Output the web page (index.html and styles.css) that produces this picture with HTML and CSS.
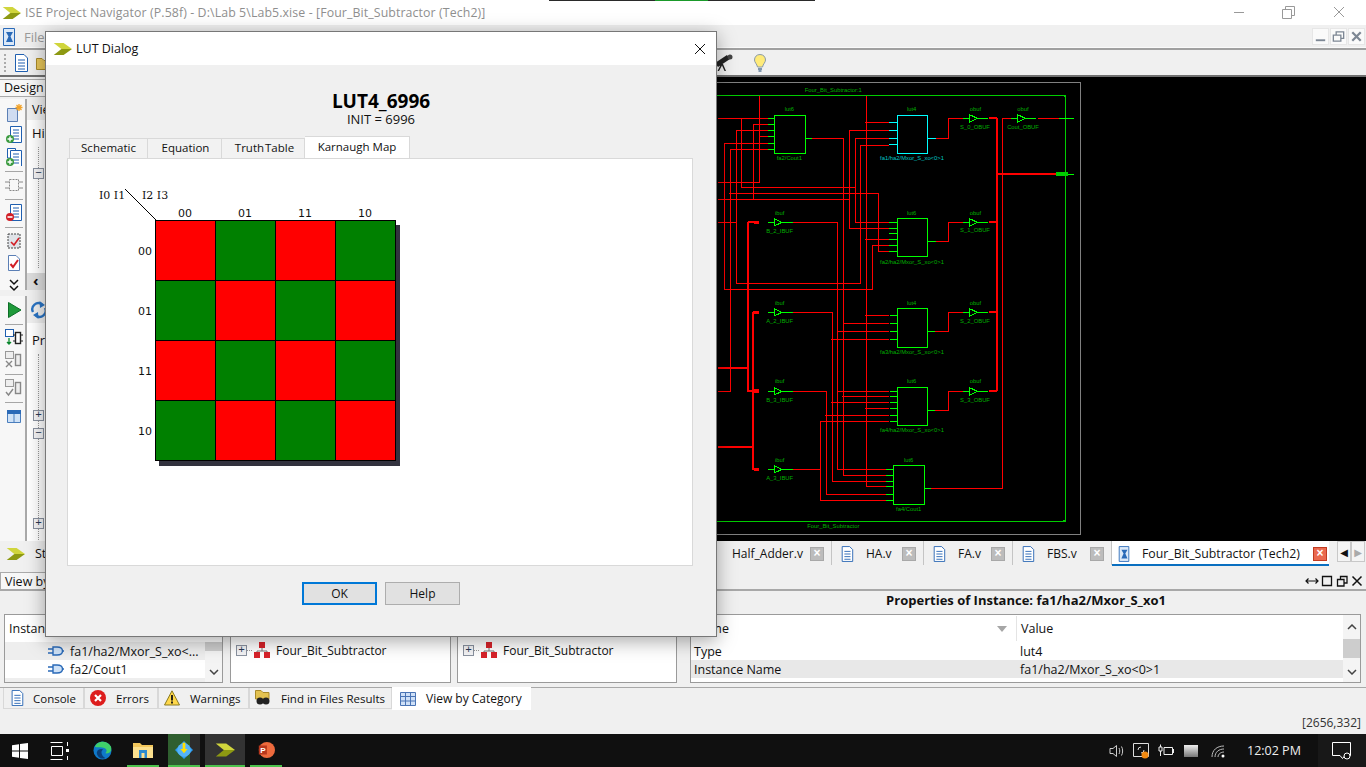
FILE: index.html
```html
<!DOCTYPE html>
<html lang="en">
<head>
<meta charset="utf-8">
<title>ISE Project Navigator</title>
<link rel="stylesheet" href="styles.css">
</head>
<body>
<svg class="defs" width="0" height="0" aria-hidden="true">
  <symbol id="xlogo" viewBox="0 0 25 16">
    <path fill="#d0d53c" d="M1 0H14L25 8H11Z"/>
    <path fill="#8d9912" d="M11 8H25L14 16H1Z"/>
  </symbol>
  <symbol id="doc" viewBox="0 0 16 18">
    <path fill="#fff" stroke="#1f5fb0" d="M2.500 .5H11L14.500 4V17.500H2.500Z"/>
    <path stroke="#1f5fb0" d="M5 6H12M5 9H12M5 12H12M5 15H12"/>
  </symbol>
  <symbol id="tech" viewBox="0 0 16 18">
    <path fill="#dce9f8" stroke="#2a6ab8" d="M2.500 .5H13.500V17.500H2.500Z"/>
    <path fill="#2a6ab8" d="M5 4H12L9.500 8.500 12 14H5L7.500 8.500Z"/>
  </symbol>
  <symbol id="gate" viewBox="0 0 16 10">
    <path fill="none" stroke="#2a6ab8" stroke-width="1.400" d="M0 3H5M0 7H5M14 5H16"/>
    <path fill="#cfe2f7" stroke="#2a6ab8" stroke-width="1.400" d="M5 1H9C13 1 14.500 3 14.500 5S13 9 9 9H5Z"/>
  </symbol>
  <symbol id="hier" viewBox="0 0 16 16">
    <path stroke="#777" fill="none" d="M8 6V9M3 12V9H13V12"/>
    <path fill="#d8232a" d="M5 0H11V6H5ZM0 10H6V16H0ZM10 10H16V16H10Z"/>
  </symbol>
  <symbol id="chip" viewBox="0 0 18 18">
    <rect x="4.500" y="3.500" width="9" height="11" fill="none" stroke="#888" stroke-dasharray="2 1"/>
    <path stroke="#888" d="M0 6H4M0 12H4M14 6H18M14 12H18"/>
  </symbol>
  <symbol id="addoc" viewBox="0 0 18 18">
    <path fill="#fff" stroke="#1f5fb0" d="M5.500 .5H16.500V16.500H5.500Z"/>
    <path stroke="#1f5fb0" d="M8 4H14M8 7H14M8 10H14M8 13H14"/>
  </symbol>
</svg>
<div class="app">
  <div class="topstrip"></div>
  <header class="titlebar">
    <svg class="tlogo"><use href="#xlogo"/></svg>
    <span class="ttext">ISE Project Navigator (P.58f) - D:\Lab 5\Lab5.xise - [Four_Bit_Subtractor (Tech2)]</span>
    <div class="winctl">
      <svg class="wc" viewBox="0 0 50 24"><path stroke="#999" d="M20 11.500H30"/></svg>
      <svg class="wc" viewBox="0 0 50 24"><path fill="none" stroke="#999" d="M18.500 8.500H27.500V17.500H18.500ZM21.500 8V5.500H30.500V14.500H28"/></svg>
      <svg class="wc" viewBox="0 0 50 24"><path stroke="#999" d="M20 6L30 16M30 6L20 16"/></svg>
    </div>
  </header>
  <nav class="menubar">
    <svg class="micon"><use href="#tech"/></svg>
    <span class="menuitem">File</span>
    <div class="mdi">
      <span class="mdibtn"><svg viewBox="0 0 16 16"><path stroke="#7d8794" stroke-width="2" d="M3 12H13"/></svg></span>
      <span class="mdibtn"><svg viewBox="0 0 16 16"><path fill="none" stroke="#7d8794" stroke-width="1.400" d="M2.500 6.500H10.500V13H2.500ZM5.500 6V3H13.500V10H11"/></svg></span>
      <span class="mdibtn"><svg viewBox="0 0 16 16"><path stroke="#7d8794" stroke-width="2.400" d="M3.500 3.500L12.500 12.500M12.500 3.500L3.500 12.500"/></svg></span>
    </div>
  </nav>
  <div class="toolbar">
    <span class="grip"></span>
    <svg class="tbicon"><use href="#doc"/></svg>
    <svg class="tbicon" viewBox="0 0 16 16"><path fill="#e7c65a" stroke="#a98a2a" d="M.5 3.500H6L8 5.500H15.500V14.500H.5Z"/></svg>
    <svg class="scope" viewBox="0 0 20 18"><path fill="#222" d="M1 9L13 1 16 5 4 13ZM9 10L12 17H10.500L8 11.500 5 17H3.500L7 10Z"/><circle cx="16" cy="3" r="2.500" fill="#444"/></svg>
    <svg class="bulb" viewBox="0 0 14 18"><path fill="#ffeb7a" stroke="#8a9aa8" d="M7 .5C3.500 .5 1.500 3 1.500 6C1.500 8.500 4 10 4.500 13H9.500C10 10 12.500 8.500 12.500 6C12.500 3 10.500 .5 7 .5Z"/><path stroke="#5b7a99" stroke-width="1.500" d="M5 15H9M5.500 17H8.500"/></svg>
  </div>

  <main class="main">
    <section class="leftcol">
      <div class="designrow"><span class="designtab">Design</span></div>
      <div class="upper">
        <div class="side">
          <svg class="si" viewBox="0 0 18 18"><path fill="#cfdcf1" stroke="#5b7fb5" d="M2.500 4.500H12.500V17.500H2.500Z"/><path stroke="#f2a32a" stroke-width="1.300" d="M14 0V7M10.500 3.500H17.500M11.500 1L16.500 6M16.500 1L11.500 6"/></svg>
          <svg class="si" viewBox="0 0 18 18"><use href="#addoc"/><circle cx="5" cy="13" r="4" fill="#3a9a3e"/><path stroke="#fff" stroke-width="1.400" d="M2.500 13H7.500M5 10.500V15.500"/></svg>
          <svg class="si" viewBox="0 0 18 18"><path fill="#fff" stroke="#1f5fb0" d="M2.500 .5H10.500V10H2.500Z"/><use href="#addoc" y="2"/><circle cx="5" cy="14" r="4" fill="#3a9a3e"/><path stroke="#fff" stroke-width="1.400" d="M2.500 14H7.500M5 11.500V16.500"/></svg>
          <span class="sep"></span>
          <svg class="si"><use href="#chip"/></svg>
          <span class="sep"></span>
          <svg class="si" viewBox="0 0 18 18"><use href="#addoc"/><circle cx="5" cy="13" r="4" fill="#d21f26"/><path stroke="#fff" stroke-width="1.600" d="M2.500 13H7.500"/></svg>
          <span class="sep"></span>
          <svg class="si" viewBox="0 0 18 18"><rect x="3" y="2" width="12" height="14" fill="#dfe3e8" stroke="#444" stroke-dasharray="2 1"/><path fill="none" stroke="#d21f26" stroke-width="1.600" d="M6 10L9 13 14 6"/></svg>
          <svg class="si" viewBox="0 0 18 18"><path fill="#fff" stroke="#5b7fb5" d="M3.500 1.500H11L14.500 5V16.500H3.500Z"/><path fill="none" stroke="#d21f26" stroke-width="2" d="M5.500 10L8 13 13 6"/></svg>
          <svg class="si" viewBox="0 0 18 18"><path fill="none" stroke="#111" stroke-width="1.500" d="M5 4L9 8 13 4M5 10L9 14 13 10"/></svg>
        </div>
        <div class="pane">
          <div class="panehead"><span>View</span></div>
          <div class="panebody">
            <div class="panelabel">Hierarchy</div>
            <div class="tree treeup"><span class="tbox tm1">−</span></div>
          </div>
          <div class="hscroll"><span>‹</span></div>
        </div>
      </div>
      <div class="split"></div>
      <div class="lower">
        <div class="side side2">
          <svg class="si" viewBox="0 0 18 18"><path fill="#1f9a3a" stroke="#0d6e28" d="M3.500 1.500L16 9 3.500 16.500Z"/></svg>
          <span class="sep"></span>
          <svg class="si" viewBox="0 0 18 18"><rect x="0.500" y="0.500" width="8" height="7" fill="#fff" stroke="#1f5fb0"/><path stroke="#0a8a2e" stroke-width="1.300" d="M4 9V15M2 13L4 15 6 13"/><rect x="10.500" y="3.500" width="5" height="11" fill="#fff" stroke="#222" stroke-width="1.400"/><path stroke="#222" d="M8 6H10M8 12H10M16 6H18M16 12H18"/></svg>
          <svg class="si" viewBox="0 0 18 18"><rect x="0.500" y="0.500" width="8" height="7" fill="#eee" stroke="#999"/><path stroke="#888" stroke-width="1.400" d="M1 10L7 16M7 10L1 16"/><rect x="10.500" y="3.500" width="5" height="11" fill="#eee" stroke="#888" stroke-width="1.400"/></svg>
          <span class="sep"></span>
          <svg class="si" viewBox="0 0 18 18"><rect x="0.500" y="0.500" width="8" height="7" fill="#eee" stroke="#999"/><path fill="none" stroke="#888" stroke-width="1.400" d="M1 13L3.500 16 8 10"/><rect x="10.500" y="3.500" width="5" height="11" fill="#eee" stroke="#888" stroke-width="1.400"/></svg>
          <span class="sep"></span>
          <svg class="si" viewBox="0 0 18 18"><path fill="#cfe2f7" stroke="#4a7ebd" d="M2.500 3.500H15.500V15.500H2.500ZM9 7V15.500"/><path fill="#2a6ab8" d="M2 3H16V7H2Z"/></svg>
        </div>
        <div class="pane">
          <div class="panehead2">
            <svg class="refresh" viewBox="0 0 18 18"><path fill="none" stroke="#2a74c4" stroke-width="2.400" d="M3 11A6 6 0 0 1 12 3.500M15 7A6 6 0 0 1 6 14.500"/><path fill="#2a74c4" d="M9.500 0L15 4 10 7ZM8.500 18L3 14 8 11Z"/></svg>
          </div>
          <div class="panebody pb2">
            <div class="panelabel">Processes</div>
            <div class="tree treelow">
              <span class="tbox tm2">+</span>
              <span class="tbox tm3">−</span>
              <span class="tbox tm4">+</span>
            </div>
          </div>
        </div>
      </div>
    </section>
    <div class="canvas">
      <svg class="schem" viewBox="3 -9 1947 1392" shape-rendering="crispEdges">
        <defs>
          <g id="buf">
            <path fill="none" stroke="#0f0" stroke-width="3" d="M0 0H20M43 0H75M20 -11L43 0 20 11Z"/>
          </g>
        </defs>
        <path fill="none" stroke="#808080" stroke-width="3" d="M3 8H1092V1363H3"/>
        <path fill="none" stroke="#0c0" stroke-width="3" d="M3 47H1048V1324H3"/>
        <path fill="#0c0" d="M1040 47H1050V56ZM1038 1325H1050V1315Z"/>
        <path fill="none" stroke="#f00" stroke-width="3" d="M5 115H155M112 133H155M112 133V357M62 151H155M62 151V610H434V196H520M128 170H155M130 47V307H5M25 189H155M25 189V628H470V495H520M43 207H155M43 207V934H5M76 115V322H418M418 175V427M418 175H520M418 427H520M5 357H400M400 151V445M400 151H520M400 445H520M40 340H488V513H520M452 47V1220M447 127H520M447 477H520M447 707H520M447 985H520M452 1219H510M288 175H383V1187H510M380 730H520M378 949H520M230 427H365V1168H510M365 754H520M365 934H520M5 427H60M230 697H350V1205H510M345 778H520M345 966H520M230 934H331V1243H510M327 1006H520M230 1168H313M313 1024V1260H510M313 1024H520M660 175H697V115H741M660 484H697V427H741M657 754H697V697H741M657 991H697V934H741M645 1225H859V115H885M965 115H1030"/>
        <path fill="none" stroke="#f00" stroke-width="6" d="M842 115V934M820 115H842M820 427H842M820 697H842M820 934H842M842 282H1020M95 427V932H115M95 427H115M5 863H95M110 697V1168H125M110 697H125M5 1100H110"/>
        <path fill="#f00" d="M115 422H130V432H115ZM115 692H130V702H115ZM115 927H130V938H115ZM115 1163H130V1173H115Z"/>
        <path fill="#0c0" d="M1020 275H1055V288H1020Z"/>
        <path fill="none" stroke="#0f0" stroke-width="3" d="M1030 115H1075M1055 282H1075M155 115H175M155 133H175M155 151H175M155 170H175M155 189H175M155 207H175M269 175H288M520 427H544M520 445H544M520 459H544M520 477H544M520 495H544M520 513H544M635 484H660M522 707H544M522 730H544M522 754H544M522 778H544M635 754H657M522 934H544M522 949H544M522 967H544M522 985H544M522 1006H544M522 1024H544M635 991H657M510 1168H532M510 1187H532M510 1205H532M510 1219H532M510 1243H532M510 1260H532M626 1225H645"/>
        <path fill="none" stroke="#0ff" stroke-width="3" d="M520 127H544M520 151H544M520 175H544M520 193H544M635 175H660"/>
        <rect x="175" y="106" width="94" height="114" fill="none" stroke="#0f0" stroke-width="3"/>
        <rect x="544" y="106" width="91" height="114" fill="none" stroke="#0ff" stroke-width="3"/>
        <rect x="544" y="415" width="91" height="114" fill="none" stroke="#0f0" stroke-width="3"/>
        <rect x="544" y="685" width="91" height="118" fill="none" stroke="#0f0" stroke-width="3"/>
        <rect x="544" y="922" width="91" height="114" fill="none" stroke="#0f0" stroke-width="3"/>
        <rect x="532" y="1156" width="94" height="117" fill="none" stroke="#0f0" stroke-width="3"/>
        <use href="#buf" x="155" y="427"/><use href="#buf" x="155" y="697"/><use href="#buf" x="155" y="934"/><use href="#buf" x="155" y="1168"/>
        <use href="#buf" x="741" y="115"/><use href="#buf" x="741" y="427"/><use href="#buf" x="741" y="697"/><use href="#buf" x="741" y="934"/><use href="#buf" x="885" y="115"/>
        <g class="lbl" shape-rendering="auto">
          <text x="352" y="36">Four_Bit_Subtractor:1</text>
          <text x="352" y="1344">Four_Bit_Subtractor</text>
          <text x="220" y="93">lut6</text><text x="220" y="239">fa2/Cout1</text>
          <text x="587" y="93">lut4</text><text class="cy" x="588" y="239">fa1/ha2/Mxor_S_xo&lt;0&gt;1</text>
          <text x="587" y="404">lut6</text><text x="588" y="551">fa2/ha2/Mxor_S_xo&lt;0&gt;1</text>
          <text x="587" y="674">lut4</text><text x="588" y="821">fa3/ha2/Mxor_S_xo&lt;0&gt;1</text>
          <text x="587" y="909">lut6</text><text x="588" y="1055">fa4/ha2/Mxor_S_xo&lt;0&gt;1</text>
          <text x="578" y="1146">lut6</text><text x="578" y="1292">fa4/Cout1</text>
          <text x="191" y="404">ibuf</text><text x="191" y="458">B_2_IBUF</text>
          <text x="191" y="674">ibuf</text><text x="191" y="728">A_2_IBUF</text>
          <text x="191" y="909">ibuf</text><text x="191" y="965">B_3_IBUF</text>
          <text x="191" y="1146">ibuf</text><text x="191" y="1199">A_3_IBUF</text>
          <text x="778" y="93">obuf</text><text x="777" y="148">S_0_OBUF</text>
          <text x="778" y="404">obuf</text><text x="777" y="457">S_1_OBUF</text>
          <text x="778" y="674">obuf</text><text x="777" y="728">S_2_OBUF</text>
          <text x="778" y="909">obuf</text><text x="777" y="965">S_3_OBUF</text>
          <text x="921" y="93">obuf</text><text x="921" y="148">Cout_OBUF</text>
        </g>
      </svg>
    </div>
  </main>

  <div class="docbar">
    <div class="stbtn"><svg class="stlogo"><use href="#xlogo"/></svg><span>Start</span></div>
    <div class="doctabs">
      <div class="dtab t-half"><span>Half_Adder.v</span><b class="dx">×</b></div>
      <div class="dtab t-ha"><svg class="dicon"><use href="#doc"/></svg><span>HA.v</span><b class="dx">×</b></div>
      <div class="dtab t-fa"><svg class="dicon"><use href="#doc"/></svg><span>FA.v</span><b class="dx">×</b></div>
      <div class="dtab t-fbs"><svg class="dicon"><use href="#doc"/></svg><span>FBS.v</span><b class="dx">×</b></div>
      <div class="dtab active"><svg class="dicon"><use href="#tech"/></svg><span>Four_Bit_Subtractor (Tech2)</span><b class="dx red">×</b></div>
      <div class="navs"><span class="nav">◀</span><span class="nav off">▶</span></div>
    </div>
  </div>
  <div class="strip"></div>
  <div class="prophead">
    <span class="viewby">View by Category</span>
    <div class="pctl">
      <svg viewBox="0 0 14 14"><path stroke="#111" fill="none" stroke-width="1.200" d="M1 7H13M3.500 4.500L1 7 3.500 9.500M10.500 4.500L13 7 10.500 9.500"/></svg>
      <svg viewBox="0 0 14 14"><path stroke="#111" fill="none" stroke-width="1.300" d="M2.500 2.500H11.500V11.500H2.500Z"/></svg>
      <svg viewBox="0 0 14 14"><path stroke="#111" fill="none" stroke-width="1.300" d="M2.500 5.500H9V12H2.500ZM5.500 5V2.500H12V9H9.500"/></svg>
      <svg viewBox="0 0 14 14"><path stroke="#111" stroke-width="1.500" d="M2.500 2.500L11.500 11.500M11.500 2.500L2.500 11.500"/></svg>
    </div>
  </div>
  <div class="proptitle">Properties of Instance: fa1/ha2/Mxor_S_xo1</div>
  <div class="panels">
    <div class="panel p1">
      <div class="phead">Instance</div>
      <div class="prow hl"><svg class="gate"><use href="#gate"/></svg><span>fa1/ha2/Mxor_S_xo&lt;...</span></div>
      <div class="prow"><svg class="gate"><use href="#gate"/></svg><span>fa2/Cout1</span></div>
      <div class="prow hl"></div>
      <div class="vs"><span class="vsthumb"></span><svg viewBox="0 0 10 6"><path fill="none" stroke="#444" stroke-width="1.500" d="M1 1L5 5 9 1"/></svg></div>
    </div>
    <div class="panel p2">
      <div class="hrow"><span class="tbox">+</span><i class="dots"></i><svg class="hier"><use href="#hier"/></svg><span>Four_Bit_Subtractor</span></div>
    </div>
    <div class="panel p3">
      <div class="hrow"><span class="tbox">+</span><i class="dots"></i><svg class="hier"><use href="#hier"/></svg><span>Four_Bit_Subtractor</span></div>
    </div>
    <div class="panel p4">
      <div class="pthead"><span class="c1">Name<svg class="sorti" viewBox="0 0 10 6"><path fill="#a6a6a6" d="M0 0H10L5 6Z"/></svg></span><span class="c2">Value</span></div>
      <div class="ptrow"><span class="c1">Type</span><span class="c2">lut4</span></div>
      <div class="ptrow hl2"><span class="c1">Instance Name</span><span class="c2">fa1/ha2/Mxor_S_xo&lt;0&gt;1</span></div>
      <div class="vs vs4"><svg viewBox="0 0 10 6"><path fill="none" stroke="#444" stroke-width="1.500" d="M1 5L5 1 9 5"/></svg><span class="vsthumb2"></span><svg class="down" viewBox="0 0 10 6"><path fill="none" stroke="#444" stroke-width="1.500" d="M1 1L5 5 9 1"/></svg></div>
    </div>
  </div>
  <div class="bottomtabs">
    <div class="btab b1"><svg class="bicon"><use href="#doc"/></svg><span>Console</span></div>
    <div class="btab b2"><svg class="bicon" viewBox="0 0 16 16"><circle cx="8" cy="8" r="8" fill="#dd1d1d"/><path stroke="#fff" stroke-width="2.200" d="M5 5L11 11M11 5L5 11"/></svg><span>Errors</span></div>
    <div class="btab b3"><svg class="bicon" viewBox="0 0 16 16"><path fill="#ffd84a" stroke="#8a7a20" d="M8 .8L15.500 15H.5Z"/><path stroke="#111" stroke-width="1.800" d="M8 5V10.500M8 11.500V13.500"/></svg><span>Warnings</span></div>
    <div class="btab b4"><svg class="bicon" viewBox="0 0 16 16"><path fill="#e3c251" stroke="#a98a2a" d="M.5 .5H6L8 2.500H14V9H.5Z"/><circle cx="5" cy="11" r="3.500" fill="#222"/><circle cx="11" cy="11" r="3.500" fill="#222"/></svg><span>Find in Files Results</span></div>
    <div class="btab b5"><svg class="bicon" viewBox="0 0 16 14"><path fill="#cfe0f7" stroke="#4a74b5" d="M.5 .5H15.500V13.500H.5ZM.5 4.500H15.500M.5 9H15.500M5.500 .5V13.500M10.500 .5V13.500"/></svg><span>View by Category</span></div>
  </div>
  <div class="statusbar">[2656,332]</div>
  <footer class="taskbar">
    <svg class="tb-start" viewBox="0 0 16 16"><path fill="#fff" d="M0 2.300L7 1.300V7.500H0ZM8 1.100L16 0V7.500H8ZM0 8.500H7V14.700L0 13.700ZM8 8.500H16V16L8 14.900Z"/></svg>
    <svg class="tb-view" viewBox="0 0 20 18"><path fill="none" stroke="#fff" d="M.5 .5H12.500M.5 17.500H12.500M1.500 4.500H12.500V13.500H1.500Z"/><path fill="#fff" d="M17 0H18V4H17ZM16 7H19V10H16ZM17 14H18V18H17Z"/></svg>
    <svg class="tb-app tb-edge" viewBox="0 0 20 20"><circle cx="10" cy="10" r="9.500" fill="#0f79c9"/><path fill="#3fcf6a" d="M2 6C4 0 15 -2 19 6C20 10 18 14 13 13C15 11 15 8 11 7C7 6 4 7 2 6Z"/><path fill="#0a3f7a" d="M4 12C5 8 9 8 11 9C8 10 8 15 13 18C8 20 4 16 4 12Z"/></svg>
    <span class="tb-slot t-exp"><svg viewBox="0 0 20 18"><path fill="#f2c75c" d="M0 2H7L9 4H20V17H0Z"/><path fill="#fbe08e" d="M0 6H20V17H0Z"/><path fill="#2a8ad0" d="M6 9H14V17H11.500V12H8.500V17H6Z"/></svg></span>
    <span class="tb-slot t-dl"><svg viewBox="0 0 20 20"><path fill="#2a9cf2" d="M10 0L20 10 10 20 0 10Z"/><circle cx="10" cy="10" r="7.500" fill="#54b4f7"/><path fill="#ffe100" d="M8.500 2H11.500V9H14L10 13.500 6 9H8.500Z"/></svg></span>
    <span class="tb-slot t-x"><svg><use href="#xlogo"/></svg></span>
    <span class="tb-slot t-pp"><svg viewBox="0 0 20 20"><circle cx="11" cy="10" r="9" fill="#ed6a3d"/><path fill="#b7371d" d="M2 5H11V15H2Z"/><text class="pp" x="6.500" y="13">P</text></svg></span>
    <div class="tray">
      <svg class="tr-vol" viewBox="0 0 16 16"><path fill="none" stroke="#ccc" d="M1 5.500H4L7.500 2.500V13.500L4 10.500H1ZM10 5C11 7 11 9 10 11M12.500 3.500C14 6 14 10 12.500 12.500"/></svg>
      <svg class="tr-net" viewBox="0 0 16 16"><path fill="none" stroke="#ddd" d="M.5 .5H15.500V13.500H.5ZM8 4A3 3 0 0 0 5 7M8 10A3 3 0 0 0 11 7"/><circle cx="12" cy="12" r="3.500" fill="#f28a12"/></svg>
      <svg class="tr-bat" viewBox="0 0 16 14"><path fill="none" stroke="#eee" d="M1 7H4V3H1ZM2.500 3V.5M2.500 7V12M6 3.500H14.500V10.500H6Z"/><path fill="#eee" d="M15 5H16V9H15Z"/></svg>
      <span class="tr-box"></span>
      <svg class="tr-wifi" viewBox="0 0 16 14"><path fill="none" stroke="#bbb" d="M1 13C1 6 6 2 13 2M4 13C4 8 8 5 13 5M7 13C7 10 10 8 13 8"/><circle cx="12" cy="12" r="1.500" fill="#fff"/></svg>
      <span class="clock">12:02 PM</span>
      <span class="actionc"><svg viewBox="0 0 20 18"><path fill="none" stroke="#fff" d="M.5 .5H18.500V13.500H13L10.500 16.500 8 13.500H.5Z"/><circle cx="15" cy="14" r="3" fill="#111" stroke="#fff"/></svg></span>
    </div>
  </footer>

  <section class="dialog">
    <div class="dtitle">
      <svg class="dlogo"><use href="#xlogo"/></svg>
      <span class="dname">LUT Dialog</span>
      <svg class="dclose" viewBox="0 0 12 12"><path stroke="#111" d="M1 1L11 11M11 1L1 11"/></svg>
    </div>
    <div class="dbody">
      <h1 class="lutname">LUT4_6996</h1>
      <div class="lutinit">INIT = 6996</div>
      <div class="ltabs">
        <span class="ltab l1">Schematic</span>
        <span class="ltab l2">Equation</span>
        <span class="ltab l3">Truth Table</span>
        <span class="ltab l4">Karnaugh Map</span>
      </div>
      <div class="lpane">
        <div class="legend">
          <span class="lg-a">I0 I1</span>
          <span class="lg-b">I2 I3</span>
          <svg class="lg-line" viewBox="0 0 31 31"><path stroke="#000" d="M0 0L31 31"/></svg>
        </div>
        <div class="kcols"><span>00</span><span>01</span><span>11</span><span>10</span></div>
        <div class="kbody">
          <div class="krows"><span>00</span><span>01</span><span>11</span><span>10</span></div>
          <div class="kmatrix">
            <i class="r"></i><i class="g"></i><i class="r"></i><i class="g"></i>
            <i class="g"></i><i class="r"></i><i class="g"></i><i class="r"></i>
            <i class="r"></i><i class="g"></i><i class="r"></i><i class="g"></i>
            <i class="g"></i><i class="r"></i><i class="g"></i><i class="r"></i>
          </div>
        </div>
      </div>
      <div class="dbtns">
        <button class="btn primary">OK</button>
        <button class="btn">Help</button>
      </div>
    </div>
  </section>
</div>
</body>
</html>
```

FILE: styles.css
```css
* { box-sizing: border-box; }
html, body { margin: 0; padding: 0; background: #f0f0f0; }
.defs { position: absolute; }
.app {
  position: relative;
  width: 1366px;
  height: 767px;
  overflow: hidden;
  display: flex;
  flex-direction: column;
  background: #f0f0f0;
  font-family: "Open Sans", "Noto Sans", sans-serif;
  font-size: 12px;
  color: #111;
}
.topstrip { position: absolute; left: 549px; top: 0; width: 266px; height: 1px; background: linear-gradient(90deg, #2a2a2a 106px, #1a9a2a 106px, #1a9a2a 159px, #2a2a2a 159px); }

.titlebar { height: 25px; background: #fff; display: flex; align-items: center; padding-left: 2px; }
.tlogo { width: 19px; height: 14px; margin-right: 4px; }
.ttext { color: #8f8f8f; font-size: 12.350px; letter-spacing: .1px; white-space: nowrap; }
.winctl { margin-left: auto; display: flex; margin-right: 2px; }
.wc { width: 50px; height: 24px; }

.menubar { height: 25px; display: flex; align-items: center; padding-left: 0; border-bottom: 2px solid #a0a0a0; box-shadow: inset 0 -1px 0 #fafafa; }
.micon { width: 16px; height: 18px; margin-left: 1px; margin-right: 7px; }
.menuitem { color: #9a9a9a; font-size: 13px; }
.mdi { margin-left: auto; display: flex; gap: 1px; margin-right: 1px; }
.mdibtn { width: 17px; height: 17px; background: #fafafa; border: 1px solid #e6e6e6; display: flex; }
.mdibtn svg { width: 15px; height: 15px; }

.toolbar { height: 25px; display: flex; align-items: center; padding-left: 4px; }
.grip { width: 2px; height: 18px; border-left: 2px dotted #aaa; }
.tbicon { width: 16px; height: 18px; margin-left: 7px; }
.scope { width: 20px; height: 18px; margin-left: 662px; }
.bulb { width: 14px; height: 18px; margin-left: 19px; }

.main { height: 466px; display: flex; border-top: 2px solid #707070; }
.leftcol { width: 717px; flex: none; display: flex; flex-direction: column; }
.designrow { height: 22px; padding-top: 2px; }
.designtab { display: block; height: 18px; line-height: 16px; padding-left: 4px; background: #f7f7f7; border: 1px solid #aaa; border-width: 1px 1px 1px 0; font-size: 12.500px; }
.upper { height: 191px; display: flex; }
.lower { flex: 1; display: flex; }
.split { height: 6px; }
.side { width: 27px; padding: 3px 0 0 2px; background: #f7f7f7; border-right: 2px solid #aaa; display: flex; flex-direction: column; align-items: center; }
.side2 { padding-top: 3px; }
.si { width: 22px; height: 22px; flex: none; padding: 2px; }
.sep { width: 18px; height: 6px; flex: none; background: linear-gradient(#a6a6a6, #a6a6a6) center/18px 1px no-repeat; }
.pane { flex: 1; display: flex; flex-direction: column; }
.panehead { height: 21px; padding: 2px 0 0 5px; font-size: 12.500px; }
.panebody { flex: 1; background: #fff; padding: 4px 0 0 5px; }
.panelabel { font-size: 13px; height: 18px; line-height: 18px; }
.tree { margin-left: 6px; border-left: 1px dotted #999; display: flex; flex-direction: column; align-items: flex-start; }
.treeup { height: 121px; margin-top: 5px; }
.treelow { height: 186px; margin-top: 5px; }
.tbox { display: block; width: 11px; height: 11px; flex: none; background: #f4f4f6; border: 1px solid #8a92a0; color: #2b3a55; font: 11px/8px "Liberation Mono", monospace; text-align: center; }
.tm1 { margin: 21px 0 0 -6px; }
.tm2 { margin: 56px 0 0 -6px; }
.tm3 { margin: 7px 0 0 -6px; }
.tm4 { margin: 79px 0 0 -6px; }
.hscroll { height: 17px; background: #ddd; padding-left: 6px; font-size: 15px; line-height: 14px; font-weight: bold; }
.panehead2 { height: 27px; padding: 5px 0 0 3px; }
.refresh { width: 18px; height: 18px; display: block; }
.pb2 { padding-top: 8px; }

.canvas { flex: 1; background: #000; overflow: hidden; }
.schem { display: block; width: 649px; height: 464px; }
.lbl text { font: 17.500px "Liberation Sans", sans-serif; fill: #00b000; text-anchor: middle; }
.lbl .cy { fill: #00c8c8; }

.docbar { height: 25px; display: flex; }
.stbtn { width: 717px; flex: none; display: flex; align-items: center; padding: 0 0 0 4px; font-size: 12.500px; }
.stlogo { width: 19px; height: 14px; margin: 0 10px 0 2px; }
.doctabs { flex: 1; display: flex; align-items: flex-start; }
.dtab { display: flex; align-items: center; flex: none; height: 24px; padding: 1px 7px 0 8px; border-right: 1px solid #c4c4c4; }
.t-half { width: 115px; padding-left: 15px; }
.t-ha { width: 92px; }
.t-fa { width: 89px; }
.t-fbs { width: 99px; }
.dtab span { white-space: nowrap; font-size: 12px; }
.dicon { width: 14px; height: 18px; margin-right: 12px; flex: none; }
.dx { width: 14px; height: 14px; background: #bcbcbc; border: 1px solid #a8a8a8; color: #fff; font: bold 12px/11px "Liberation Sans", sans-serif; text-align: center; flex: none; margin-left: auto; }
.dtab.active { width: 217px; background: #fff; height: 25px; padding: 2px 2px 0 5px; border-bottom: 2px solid #0a6fc0; border-right: 0; }
.active .dicon { margin-right: 11px; }
.dtab.active span { font-size: 12.300px; }
.dtab.active .dx { background: #ea6a50; border-color: #c23a20; }
.navs { display: flex; margin-left: 8px; }
.nav { width: 14px; height: 21px; font: 10px/21px "DejaVu Sans", sans-serif; text-align: center; background: #f4f4f4; border: 1px solid #c8c8c8; }
.nav.off { color: #aaa; }

.strip { height: 6px; }
.prophead { height: 19px; display: flex; align-items: center; border-bottom: 2px solid #a8a8a8; }
.viewby { display: block; width: 120px; height: 18px; background: #f7f7f7; border: 1px solid #aaa; padding-left: 4px; font-size: 12.500px; line-height: 17px; }
.pctl { margin-left: auto; display: flex; gap: 1px; margin-right: 2px; }
.pctl svg { width: 14px; height: 14px; }
.proptitle { height: 23px; padding-left: 686px; text-align: center; font-weight: 700; font-size: 13px; line-height: 19px; }
.panels { height: 69px; display: flex; padding-left: 4px; }
.panel { position: relative; background: #fff; border: 1px solid #9a9a9a; overflow: hidden; font-size: 12.500px; }
.p1 { width: 219px; margin-right: 7px; }
.p2 { width: 221px; margin-right: 6px; font-size: 12px; }
.p3 { width: 220px; margin-right: 13px; font-size: 12px; }
.p4 { width: 671px; }
.phead { height: 27px; padding: 5px 0 0 4px; }
.prow { height: 18px; display: flex; align-items: center; padding-left: 43px; width: 201px; background: #fff; }
.prow.hl { background: #eeeeee; }
.gate { width: 16px; height: 10px; margin-right: 6px; }
.vs { position: absolute; right: 0; top: 27px; width: 17px; bottom: 0; background: #f4f4f4; }
.vsthumb { display: block; height: 9px; background: #cdcdcd; }
.vs svg { display: block; width: 10px; height: 6px; margin: 18px auto 0; }
.vs4 { top: 0; }
.vs4 svg { margin: 9px auto 0; }
.vs4 .down { margin-top: 11px; }
.vsthumb2 { display: block; height: 19px; margin-top: 9px; background: #cdcdcd; }
.hrow { display: flex; align-items: center; height: 18px; margin-top: 26px; padding-left: 5px; }
.dots { width: 5px; border-top: 1px dotted #999; margin-right: 2px; }
.hier { width: 16px; height: 16px; margin-right: 6px; }
.pthead { display: flex; height: 27px; align-items: center; }
.ptrow { display: flex; height: 18px; align-items: center; }
.ptrow.hl2 { background: #e8e8e8; margin-right: 17px; }
.c1 { display: block; width: 325px; padding-left: 3px; position: relative; }
.c2 { display: block; padding-left: 4px; }
.pthead .c2 { border-left: 1px solid #e4e4e4; height: 25px; line-height: 25px; }
.sorti { position: absolute; right: 9px; top: 6px; width: 10px; height: 6px; }

.bottomtabs { height: 23px; margin-top: 4px; display: flex; align-items: flex-start; padding-left: 3px; font-size: 11.500px; box-shadow: inset 0 1px 0 #a8a8a8; }
.btab { display: flex; align-items: center; height: 21px; margin-top: 1px; border: 1px solid #d8d8d8; border-top: 0; white-space: nowrap; }
.bicon { width: 16px; height: 16px; flex: none; }
.b1 { width: 81px; padding-left: 5px; }
.b1 span { margin-left: 8px; }
.b2 { width: 74px; padding-left: 5px; }
.b2 span { margin-left: 10px; }
.b3 { width: 91px; padding-left: 5px; }
.b3 span { margin-left: 10px; }
.b4 { width: 143px; padding-left: 5px; }
.b4 span { margin-left: 10px; }
.b5 { width: 139px; height: 23px; margin-top: 0; padding-left: 8px; background: #fff; border: 0; font-size: 12px; }
.b5 span { margin-left: 10px; }

.statusbar { height: 24px; text-align: right; padding: 4px 5px 0 0; font-size: 12px; color: #333; }

.taskbar { height: 33px; background: #101010; display: flex; align-items: center; position: relative; }
.tb-start { width: 16px; height: 16px; margin-left: 12px; }
.tb-view { width: 20px; height: 18px; margin-left: 22px; }
.tb-edge { width: 19px; height: 19px; margin-left: 23px; margin-right: 15px; }
.tb-slot { height: 33px; display: flex; align-items: center; justify-content: center; border-bottom: 2px solid #4cc24c; flex: none; }
.tb-slot svg { width: 20px; height: 18px; }
.t-exp { width: 32px; }
.t-dl { width: 32px; margin-left: 9px; background: linear-gradient(90deg, #2f5f2f 22px, #2c2c2c 22px); }
.t-x { width: 40px; margin-left: 5px; background: #333; }
.t-pp { width: 32px; margin-left: 5px; }
.pp { font: bold 9px "Liberation Sans", sans-serif; fill: #fff; text-anchor: middle; }
.tray { margin-left: auto; display: flex; align-items: center; height: 33px; }
.tr-vol { width: 16px; height: 16px; }
.tr-net { width: 16px; height: 16px; margin-left: 8px; }
.tr-bat { width: 16px; height: 14px; margin-left: 9px; }
.tr-box { width: 14px; height: 12px; margin-left: 10px; background: linear-gradient(#eee, #777); }
.tr-wifi { width: 16px; height: 14px; margin-left: 13px; }
.clock { color: #eee; font-size: 12.500px; margin-left: 20px; width: 71px; }
.actionc { width: 48px; height: 33px; display: flex; align-items: center; justify-content: center; background: #181818; }
.actionc svg { width: 20px; height: 18px; }

.dialog { position: absolute; left: 45px; top: 31px; width: 672px; height: 606px; background: #f0f0f0; border: 1px solid #777; box-shadow: 0 4px 18px rgba(0,0,0,.35); display: flex; flex-direction: column; }
.dtitle { height: 33px; flex: none; background: #fff; display: flex; align-items: center; padding-left: 7px; }
.dlogo { width: 19px; height: 14px; margin-right: 4px; }
.dname { font-size: 12.500px; }
.dclose { width: 12px; height: 12px; margin-left: auto; margin-right: 10px; }
.dbody { flex: 1; padding: 24px 23px 0 21px; display: flex; flex-direction: column; }
.lutname { margin: 0; height: 24px; line-height: 24px; font-size: 19px; font-weight: 700; text-align: center; color: #000; padding-left: 2px; }
.lutinit { height: 16px; line-height: 12px; text-align: center; font-size: 13px; padding-left: 2px; }
.ltabs { height: 23px; margin-top: 6px; display: flex; align-items: flex-end; margin-left: 2px; }
.ltab { display: block; height: 20px; line-height: 18px; text-align: center; background: #f2f2f2; border: 1px solid #d9d9d9; border-width: 1px 1px 0 0; font-size: 11.500px; }
.l1 { width: 79px; border-left: 1px solid #d9d9d9; }
.l2 { width: 74px; padding-left: 2px; }
.l3 { width: 83px; word-spacing: -2px; padding-left: 3px; }
.l4 { width: 105px; height: 23px; background: #fff; line-height: 20px; border-left: 0; margin-bottom: -1px; position: relative; }
.lpane { height: 408px; background: #fff; border: 1px solid #d9d9d9; padding: 45px 0 0 87px; position: relative; }
.legend { position: absolute; left: 31px; top: 30px; width: 90px; height: 31px; font: 11px "DejaVu Serif", serif; }
.lg-a { position: absolute; left: 0; top: 0; }
.lg-b { position: absolute; left: 43px; top: 0; }
.lg-line { position: absolute; left: 26px; top: 0; width: 31px; height: 31px; }
.kcols { display: flex; height: 16px; font: 11px/20px "DejaVu Sans", sans-serif; }
.kcols span { width: 60px; text-align: center; }
.kbody { position: relative; }
.krows { position: absolute; right: 100%; top: 0; width: 40px; font: 11px "DejaVu Sans", sans-serif; }
.krows span { display: flex; height: 60px; align-items: center; justify-content: flex-end; padding: 2px 3px 0 0; }
.kmatrix { display: grid; width: 241px; height: 241px; grid-template-columns: repeat(4, 59px); grid-template-rows: repeat(4, 59px); gap: 1px; padding: 1px; background: #000; box-shadow: 4px 5px 0 #32323e; }
.kmatrix .r { background: #f00; }
.kmatrix .g { background: #008000; }
.dbtns { display: flex; justify-content: center; gap: 8px; margin-top: 16px; padding-left: 2px; }
.btn { width: 75px; height: 23px; font: 12px "Open Sans", sans-serif; background: #e1e1e1; border: 1px solid #adadad; color: #111; padding: 0; }
.btn.primary { border: 2px solid #0078d7; }
```
